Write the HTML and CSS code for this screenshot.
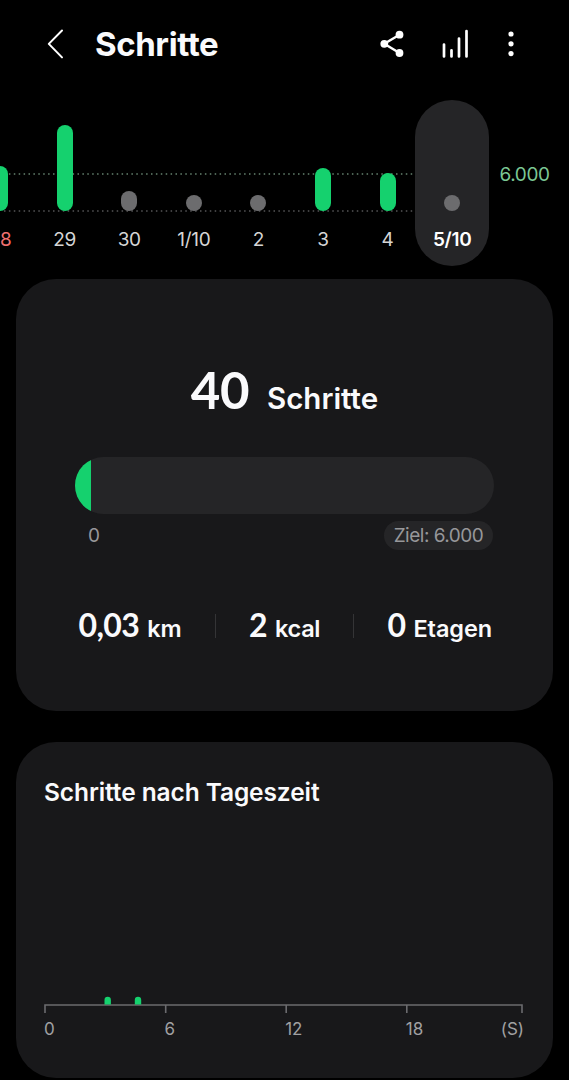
FILE: index.html
```html
<!DOCTYPE html>
<html lang="de">
<head>
<meta charset="utf-8">
<title>Schritte</title>
<link rel="stylesheet" href="styles.css">
</head>
<body>
<header class="bar">
  <svg class="back" width="20" height="32" viewBox="0 0 20 32" fill="none" stroke="#fff" stroke-width="2" stroke-linecap="round" stroke-linejoin="round"><path d="M16 2.5 2.8 15.9 16 29.4"/></svg>
  <h1 class="title">Schritte</h1>
  <svg class="share" width="26" height="28" viewBox="0 0 26 28" fill="#fff"><path d="M20.5 4.7 5.3 13.8l15.2 9.2" fill="none" stroke="#fff" stroke-width="2.4"/><circle cx="20.5" cy="4.7" r="3.9"/><circle cx="5.3" cy="13.8" r="3.9"/><circle cx="20.5" cy="23" r="3.9"/></svg>
  <svg class="stats" width="28" height="32" viewBox="0 0 28 32" stroke="#fff" stroke-width="2.7" stroke-linecap="round"><path d="M3 16.5V28.5M10.5 22.3V28.5M18 10.5V28.5M25.5 3V28.5"/></svg>
  <svg class="more" width="8" height="28" viewBox="0 0 8 28" fill="#fff"><circle cx="4" cy="4" r="2.6"/><circle cx="4" cy="13.8" r="2.6"/><circle cx="4" cy="23.6" r="2.6"/></svg>
</header>

<section class="strip">
  <svg class="guides" width="415" height="166" fill="none" stroke-width="1.5" stroke-dasharray="1.5 3.4"><path d="M4 74H415" stroke="#65836f"/><path d="M4 111H415" stroke="#555557"/></svg>
  <div class="days">
    <div class="day"><i class="step" style="height:45px"></i><span class="date sunday">28</span></div>
    <div class="day"><i class="step" style="height:86px"></i><span class="date">29</span></div>
    <div class="day"><i class="step low" style="height:20px"></i><span class="date">30</span></div>
    <div class="day"><i class="step low" style="height:16px"></i><span class="date">1/10</span></div>
    <div class="day"><i class="step low" style="height:16px"></i><span class="date">2</span></div>
    <div class="day"><i class="step" style="height:43px"></i><span class="date">3</span></div>
    <div class="day"><i class="step" style="height:38px"></i><span class="date">4</span></div>
    <div class="day today"><i class="step low" style="height:16px"></i><span class="date">5/10</span></div>
  </div>
  <span class="goal-label">6.000</span>
</section>

<main>
  <section class="card summary">
    <div class="count"><span class="big">40</span><span class="word">Schritte</span></div>
    <div class="track"><div class="fill"></div></div>
    <div class="range"><span class="zero">0</span><span class="target">Ziel: 6.000</span></div>
    <div class="metrics">
      <div class="metric km"><b>0,03</b><span>km</span></div>
      <div class="metric kcal"><b>2</b><span>kcal</span></div>
      <div class="metric floors"><b>0</b><span>Etagen</span></div>
    </div>
  </section>
  <section class="card hours">
    <h2 class="heading">Schritte nach Tageszeit</h2>
    <svg class="axis" width="480" height="20" fill="none"><path d="M1 18V10H478V18M121.7 10V18M242.2 10V18M362.8 10V18" stroke="#6b6b6e" stroke-width="1.6"/><path d="M60.5 9.5V5a3.2 3.2 0 0 1 6.4 0V9.5zM90.8 9.5V5a3.2 3.2 0 0 1 6.4 0V9.5z" fill="#15d16e"/></svg>
    <div class="ticks"><span>0</span><span>6</span><span>12</span><span>18</span><span class="unit">(S)</span></div>
  </section>
</main>
</body>
</html>
```
FILE: styles.css
```css
* { box-sizing: border-box; }
body { margin: 0; width: 569px; height: 1080px; overflow: hidden; background: #000; color: #fafafc; font-family: Inter, "Liberation Sans", sans-serif; font-variant-ligatures: no-contextual; }
svg { display: block; flex: none; }
.bar { display: flex; align-items: center; height: 88px; padding-left: 46px; }
.title { margin: 0 0 0 29px; width: 284px; font-size: 33px; line-height: 40px; font-weight: 700; letter-spacing: -.4px; }
.stats { margin-left: 35.5px; }
.more { margin-left: 38.5px; }
.strip { position: relative; display: flex; height: 166px; margin-top: 12px; overflow: hidden; }
.guides { position: absolute; left: 0; top: 0; }
.days { position: relative; display: flex; flex: none; margin-left: -32.3px; }
.day { display: flex; flex-direction: column; justify-content: flex-end; align-items: center; width: 64.6px; height: 166px; padding-bottom: 15px; }
.step { display: block; width: 16px; border-radius: 8px; background: #15d16e; }
.low { background: #6c6c6e; }
.date { margin-top: 17px; height: 23px; font-size: 19px; line-height: 23px; letter-spacing: -.3px; color: #d5d5d5; }
.sunday { color: #ef6f6f; }
.today { width: 74px; margin-left: -4.7px; border-radius: 37px; background: #252527; }
.today .date { font-weight: 600; color: #fff; }
.goal-label { margin: 63px 0 0 10.3px; font-size: 19px; line-height: 24px; letter-spacing: -.4px; color: #7bc794; }
.card { margin: 0 16px; border-radius: 40px; background: #18181a; }
.summary { height: 432px; margin-top: 13px; padding: 84px 59px 0; }
.count { display: flex; justify-content: center; align-items: baseline; gap: 18px; height: 64px; line-height: 54px; font-weight: 600; }
.big { font-family: Lato, sans-serif; font-weight: 700; font-size: 51px; letter-spacing: -.5px; }
.word { font-size: 29.5px; letter-spacing: 0; }
.track { height: 57px; margin-top: 29.5px; border-radius: 28.5px; background: #252527; overflow: hidden; }
.fill { width: 15.5px; height: 100%; background: #15d16e; }
.range { display: flex; justify-content: space-between; margin-top: 7px; padding: 0 1px 0 13px; font-size: 19px; line-height: 29px; color: #97979a; }
.target { width: 109px; height: 29px; border-radius: 15px; background: #252527; text-align: center; white-space: nowrap; letter-spacing: -.5px; }
.metrics { display: flex; height: 48px; margin-top: 53px; font-weight: 600; }
.metric { display: flex; align-items: baseline; gap: 8px; height: 48px; line-height: 44px; white-space: nowrap; }
.metric b { font-family: Lato, sans-serif; font-size: 32px; font-weight: 700; letter-spacing: -.6px; }
.metric span { font-size: 23.5px; letter-spacing: -.1px; }
.km { width: 140px; padding-left: 3.5px; }
.km span { letter-spacing: -.2px; }
.kcal { width: 137.5px; padding-left: 34px; }
.kcal span { letter-spacing: -.3px; }
.floors { padding-left: 35px; }
.kcal, .floors { background: linear-gradient(#343436, #343436) 0 11px / 1px 24px no-repeat; }
.hours { height: 336px; margin-top: 31px; padding: 34px 28px 0; }
.heading { margin: 0; font-size: 24.5px; line-height: 32px; font-weight: 600; letter-spacing: -.1px; }
.axis { margin-top: 187px; }
.ticks { display: grid; grid-template-columns: 120.6px 120.6px 120.6px 1fr auto; width: 480px; margin-top: 2px; font-size: 17px; line-height: 24px; color: #a0a0a2; }
```
